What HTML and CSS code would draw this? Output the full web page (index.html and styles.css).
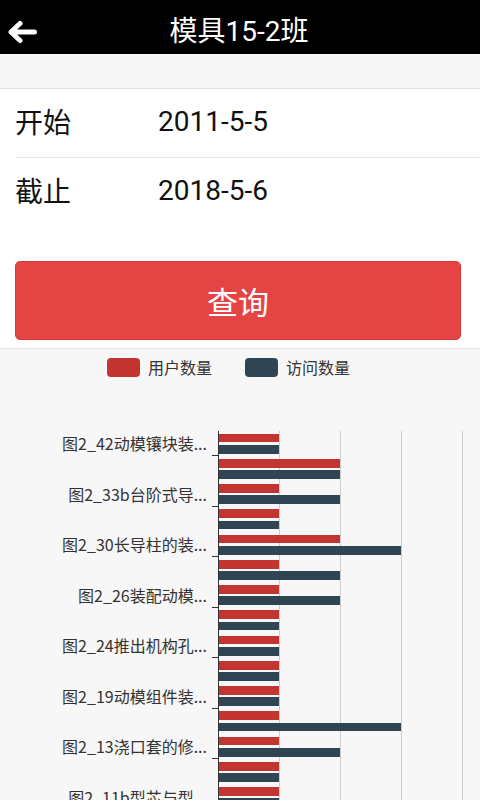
FILE: index.html
```html
<!DOCTYPE html>
<html lang="zh">
<head>
    <meta charset="UTF-8">
    <meta name="viewport" content="width=device-width, initial-scale=1.0">
    <title>模具15-2班</title>
    <link rel="stylesheet" href="styles.css">
</head>
<body>

<header class="topbar">
    <a class="back" href="#">
        <svg width="30" height="24" viewBox="0 0 30 24">
            <path d="M27.5 12H5 M13 3.5L4 12l9 8.5" fill="none" stroke="#fff" stroke-width="5" stroke-linecap="round" stroke-linejoin="round"/>
        </svg>
    </a>
    <h1 class="title">模具15-2班</h1>
    <span></span>
</header>

<div class="top-strip"></div>

<section class="query">
    <div class="field-row">
        <span class="field-label">开始</span>
        <span class="field-value">2011-5-5</span>
    </div>
    <div class="field-row">
        <span class="field-label">截止</span>
        <span class="field-value">2018-5-6</span>
    </div>
    <button class="btn-query" type="button">查询</button>
</section>

<section class="chart">
    <div class="legend">
        <span class="legend-item"><i class="legend-box users"></i>用户数量</span>
        <span class="legend-item"><i class="legend-box visits"></i>访问数量</span>
    </div>
    <div class="plot" id="plot"></div>
</section>

<script>
    const plot = document.getElementById('plot');

    // [名称, 用户数量, 访问数量]
    const data = [
        ["图2_42动模镶块装...", 1, 1],
        ["图2_41定模镶块装...", 2, 2],
        ["图2_33b台阶式导...", 1, 2],
        ["图2_32导套的装配", 1, 1],
        ["图2_30长导柱的装...", 2, 3],
        ["图2_28定模组件装...", 1, 2],
        ["图2_26装配动模...", 1, 2],
        ["图2_25推杆的装配", 1, 1],
        ["图2_24推出机构孔...", 1, 1],
        ["图2_21复位杆装配", 1, 1],
        ["图2_19动模组件装...", 1, 1],
        ["图2_17型腔的修配", 1, 3],
        ["图2_13浇口套的修...", 1, 2],
        ["图2_12浇口套装配", 1, 1],
        ["图2_11b型芯与型...", 1, 1],
        ["图2_10型芯的装配", 1, 1]
    ];

    const unit = 60;

    data.forEach(function (item, i) {
        const row = document.createElement('div');
        row.className = 'plot-row';

        const label = document.createElement('div');
        label.className = 'row-label';
        if (i % 2 === 0) {
            label.textContent = item[0];
            label.classList.add('ticked');
        }

        const bars = document.createElement('div');
        bars.className = 'row-bars';

        const users = document.createElement('div');
        users.className = 'bar users';
        users.style.width = (item[1] * unit + item[1] - 1) + 'px';

        const visits = document.createElement('div');
        visits.className = 'bar visits';
        visits.style.width = (item[2] * unit + item[2] - 1) + 'px';

        bars.appendChild(users);
        bars.appendChild(visits);
        row.appendChild(label);
        row.appendChild(bars);
        plot.appendChild(row);
    });
</script>

</body>
</html>
```

FILE: styles.css
```css
body {
    margin: 0;
    background: #fff;
    font-family: Roboto, "Noto Sans CJK SC", sans-serif;
    color: #111;
}
.topbar {
    height: 54px;
    box-sizing: border-box;
    padding-top: 10px;
    background: #000;
    display: grid;
    grid-template-columns: 1fr auto 1fr;
    align-items: center;
}
.back {
    display: flex;
    padding-left: 7px;
}
.title {
    margin: 0 2px 0 0;
    color: #fff;
    font-size: 28px;
    font-weight: normal;
    line-height: 34px;
}
.top-strip {
    height: 34px;
    background: #f7f7f7;
    border-bottom: 1px solid #e3e3e3;
}
.query {
    padding-bottom: 8px;
    border-bottom: 1px solid #e6e6e6;
}
.field-row {
    display: flex;
    align-items: center;
    box-sizing: border-box;
    height: 68px;
    padding-bottom: 4px;
    margin-left: 15px;
}
.field-row:first-child {
    height: 69px;
    border-bottom: 1px solid #e6e6e6;
}
.field-label {
    width: 143px;
    font-size: 28px;
}
.field-value {
    font-size: 28px;
}
.btn-query {
    display: block;
    width: 446px;
    height: 79px;
    margin: 35px 0 0 15px;
    background: #e54444;
    border: 1px solid #d63b3b;
    border-radius: 5px;
    color: #fff;
    font-family: "Noto Sans CJK SC", sans-serif;
    font-size: 31px;
    padding: 0;
}
.chart {
    background: #f7f7f7;
    padding-top: 9px;
    font-family: "Noto Sans CJK SC", sans-serif;
    color: #333;
}
.legend {
    display: flex;
    gap: 33px;
    padding-left: 107px;
    height: 19px;
    margin-bottom: 54px;
}
.legend-item {
    display: flex;
    align-items: center;
    gap: 8px;
    font-size: 16px;
    line-height: 19px;
}
.legend-box {
    width: 33px;
    height: 19px;
    border-radius: 4px;
}
.legend-box.users, .bar.users {
    background: #c23531;
}
.legend-box.visits, .bar.visits {
    background: #2f4554;
}
.plot-row {
    display: flex;
    height: 25.25px;
}
.row-label {
    width: 218px;
    box-sizing: border-box;
    padding-right: 11px;
    text-align: right;
    font-size: 16px;
    line-height: 25px;
    white-space: nowrap;
}
.row-label.ticked {
    background: linear-gradient(#333, #333) right bottom / 6px 1px no-repeat;
}
.row-bars {
    flex: 1;
    border-left: 1px solid #333;
    background: repeating-linear-gradient(to right, transparent 0 60px, #ccc 60px 61px);
    display: flex;
    flex-direction: column;
    gap: 2.6px;
    padding-top: 2.5px;
}
.bar {
    height: 8.8px;
}
```
